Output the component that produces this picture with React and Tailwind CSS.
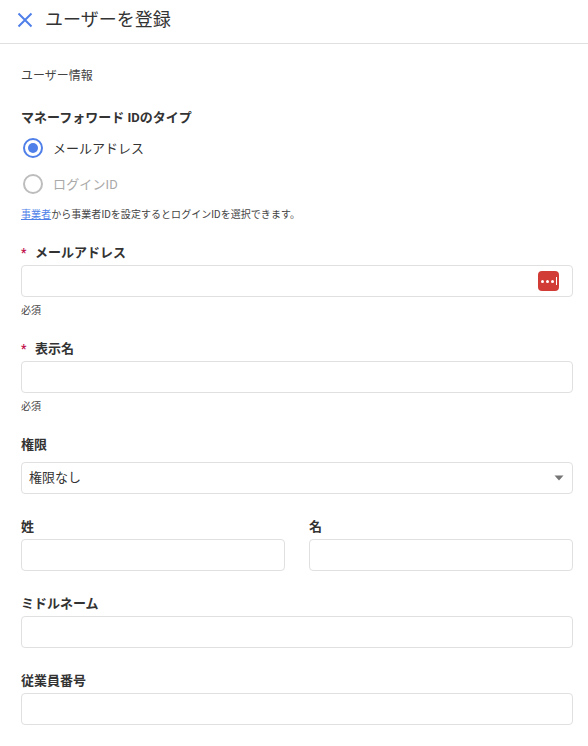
import React from "react";

const font = "font-['Roboto','Noto_Sans_CJK_JP',sans-serif]";

const Label = ({ children, required }) => (
  <div className="flex items-center h-[20px] text-[13px] leading-[20px] font-bold text-[#333]">
    {required && <span className="w-[15px] -mr-[1px] text-[#c2134f] text-[12px]">*</span>}
    <span>{children}</span>
  </div>
);

const Input = ({ children }) => (
  <div className="relative h-[32px] w-full rounded-[4px] border border-[#e0e0e0] bg-white">
    {children}
  </div>
);

const Hint = () => (
  <p className="h-[12px] mt-[8px] text-[10px] leading-[12px] text-[#444]">必須</p>
);

const Radio = ({ checked, children }) => (
  <div className="flex items-center h-[20px] pl-[2px]">
    <span
      className={
        checked
          ? "flex items-center justify-center w-[20px] h-[20px] rounded-full border-2 border-[#4f7fe8]"
          : "w-[20px] h-[20px] rounded-full border-2 border-[#bdbdbd]"
      }
    >
      {checked && <span className="w-[10px] h-[10px] rounded-full bg-[#4f7fe8]" />}
    </span>
    <span className={checked ? "ml-[10px] pt-[1px] text-[13px] text-[#333]" : "ml-[10px] pt-[1px] text-[13px] tracking-[0.15px] text-[#aaa]"}>
      {children}
    </span>
  </div>
);

export default function App() {
  return (
    <div className={`${font} h-[746px] w-[588px] overflow-hidden bg-white`}>
      <header className="flex items-center h-[44px] border-b border-[#e0e0e0] pb-[4px] pl-[17px]">
        <svg width="16" height="16" viewBox="0 0 16 16" fill="none" stroke="#4f7fe8" strokeWidth="2">
          <path d="M1.5 1.5 14.5 14.5M14.5 1.5 1.5 14.5" />
        </svg>
        <h1 className="ml-[12px] text-[18px] font-normal text-[#333]">ユーザーを登録</h1>
      </header>

      <main className="px-[21px] pr-[15px]">
        <h2 className="mt-[24px] text-[12px] leading-[16px] text-[#444]">ユーザー情報</h2>

        <div className="mt-[24px]">
          <Label>マネーフォワード IDのタイプ</Label>
        </div>
        <div className="mt-[10px] flex flex-col gap-[16px]">
          <Radio checked>メールアドレス</Radio>
          <Radio>ログインID</Radio>
        </div>
        <p className="mt-[14px] text-[10px] leading-[14px] tracking-[0.05px] text-[#444]">
          <span className="text-[#4f7fe8] underline">事業者</span>から事業者IDを設定するとログインIDを選択できます。
        </p>

        <div className="mt-[21px]">
          <Label required>メールアドレス</Label>
          <div className="mt-[2px]">
            <Input>
              <span className="absolute right-[13px] top-[5px] flex items-center justify-center gap-[2px] w-[21px] h-[20px] rounded-[4px] bg-[#d13c36]">
                <span className="w-[3px] h-[3px] rounded-full bg-white" />
                <span className="w-[3px] h-[3px] rounded-full bg-white" />
                <span className="w-[3px] h-[3px] rounded-full bg-white" />
                <span className="w-[1px] h-[8px] bg-white" />
              </span>
            </Input>
          </div>
          <Hint />
        </div>

        <div className="mt-[22px]">
          <Label required>表示名</Label>
          <div className="mt-[2px]">
            <Input />
          </div>
          <Hint />
        </div>

        <div className="mt-[22px]">
          <Label>権限</Label>
          <div className="mt-[7px]">
            <Input>
              <div className="flex items-center justify-between h-full pl-[7px] pr-[8px] text-[13px] text-[#333]">
                <span>権限なし</span>
                <svg width="10" height="6" viewBox="0 0 10 6" fill="#757575">
                  <path d="M0.5 0.5h9L5 5.5z" />
                </svg>
              </div>
            </Input>
          </div>
        </div>

        <div className="mt-[23px] grid grid-cols-2 gap-[24px]">
          <div>
            <Label>姓</Label>
            <div className="mt-[2px]">
              <Input />
            </div>
          </div>
          <div>
            <Label>名</Label>
            <div className="mt-[2px]">
              <Input />
            </div>
          </div>
        </div>

        <div className="mt-[23px]">
          <Label>ミドルネーム</Label>
          <div className="mt-[2px]">
            <Input />
          </div>
        </div>

        <div className="mt-[23px]">
          <Label>従業員番号</Label>
          <div className="mt-[2px]">
            <Input />
          </div>
        </div>
      </main>
    </div>
  );
}
